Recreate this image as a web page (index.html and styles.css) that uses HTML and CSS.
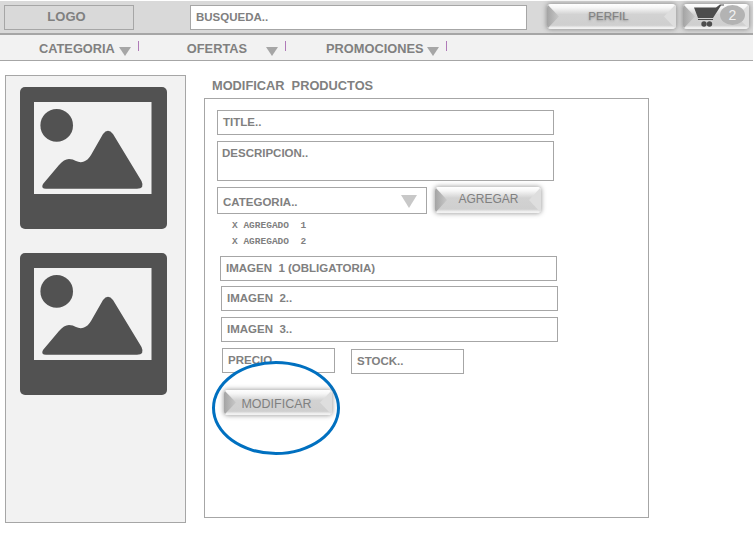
FILE: index.html
```html
<!DOCTYPE html>
<html lang="es">
<head>
  <meta charset="UTF-8" />
  <title>Modificar productos</title>
  <link rel="stylesheet" href="styles.css">
</head>
<body>

  <header class="topbar">
    <div class="logo">LOGO</div>
    <div class="search">BUSQUEDA..</div>
    <div class="btn btn-perfil"><span>PERFIL</span></div>
    <div class="btn btn-cart">
      <svg class="cart-icon" width="32" height="26" viewBox="0 0 32 26">
        <path d="M0 3.5H22L26 .5H30V1.500H27L19 14H4z" fill="#4d4d4d"/>
        <rect x="4" y="15" width="15" height="1" fill="#4d4d4d"/>
        <circle cx="10" cy="20" r="2.700" fill="#4d4d4d"/>
        <circle cx="15.500" cy="20" r="2.700" fill="#4d4d4d"/>
      </svg>
      <span class="cart-count">2</span>
    </div>
  </header>

  <nav class="menu">
    <div class="menu-item item-cat">CATEGORIA<i class="arrow"></i><b class="sep"></b></div>
    <div class="menu-item item-ofe">OFERTAS<i class="arrow"></i><b class="sep"></b></div>
    <div class="menu-item item-pro">PROMOCIONES<i class="arrow"></i><b class="sep"></b></div>
  </nav>

  <div class="content">
    <aside class="sidebar">
      <svg class="thumb" width="147" height="142" viewBox="0 0 147 142">
        <defs>
          <g id="picture">
            <rect width="147" height="142" rx="5" fill="#525252"/>
            <rect x="14" y="15" width="117.500" height="92" fill="#f2f2f2"/>
            <circle cx="36.700" cy="38.400" r="16.300" fill="#525252"/>
            <path d="M26 101.700Q20.500 101.700 23 97L39 78Q44 72 49 72Q53 72 56 74Q60 76 64 74.500Q68 73 71 68L83 47Q88 40.500 93 47L121.500 94Q125 101.700 117 101.700z" fill="#525252"/>
          </g>
        </defs>
        <use href="#picture"/>
      </svg>
      <svg class="thumb" width="147" height="142" viewBox="0 0 147 142">
        <use href="#picture"/>
      </svg>
    </aside>

    <main class="main">
      <h1 class="title">MODIFICAR&nbsp; PRODUCTOS</h1>
      <section class="panel">
        <div class="field f-title">TITLE..</div>
        <div class="field f-desc">DESCRIPCION..</div>
        <div class="cat-row">
          <div class="field f-cat">CATEGORIA..<i class="arrow arrow-big"></i></div>
          <div class="btn btn-agregar"><span>AGREGAR</span></div>
        </div>
        <ul class="added">
          <li>X AGREGADO&nbsp; 1</li>
          <li>X AGREGADO&nbsp; 2</li>
        </ul>
        <div class="field f-img1">IMAGEN&nbsp; 1 (OBLIGATORIA)</div>
        <div class="field f-img2">IMAGEN&nbsp; 2..</div>
        <div class="field f-img3">IMAGEN&nbsp; 3..</div>
        <div class="price-row">
          <div class="field f-precio">PRECIO</div>
          <div class="field f-stock">STOCK..</div>
        </div>
        <div class="highlight"></div>
        <div class="btn btn-modificar"><span>MODIFICAR</span></div>
      </section>
    </main>
  </div>

</body>
</html>
```

FILE: styles.css
```css
body {
  margin: 0;
  background-color: #fff;
  color: #808080;
  font-family: "Liberation Sans", Arial, sans-serif;
  font-size: 11.5px;
  font-weight: bold;
  overflow: hidden;
}

/* barra superior */
.topbar {
  display: flex;
  align-items: flex-start;
  box-sizing: border-box;
  width: 753px;
  height: 34px;
  margin-top: 1px;
  padding-top: 3px;
  background-color: #d9d9d9;
  border-bottom: 2px solid #a6a6a6;
}

.logo {
  box-sizing: border-box;
  width: 130px;
  height: 25px;
  margin: 1px 0 0 4px;
  padding-right: 5px;
  border: 1px solid #a6a6a6;
  font-size: 13px;
  line-height: 22px;
  text-align: center;
}

.search {
  box-sizing: border-box;
  width: 337px;
  height: 25px;
  margin: 1px 0 0 56px;
  padding-left: 5px;
  border: 1px solid #a6a6a6;
  background-color: #fff;
  line-height: 22px;
}

/* botones con bisel */
.btn {
  position: relative;
  box-sizing: border-box;
  border-radius: 4px;
  background: linear-gradient(#fff 0, #f6f6f6 15%, #d2d2d2 42%, #cfcfcf 85%, #eee 94%, #f4f4f4 100%);
  box-shadow: 0 0 4px 1px rgba(90, 90, 90, 0.5);
  font-size: 12px;
  font-weight: normal;
  text-align: center;
  overflow: hidden;
}

.btn::before,
.btn::after {
  content: "";
  position: absolute;
  top: 0;
  bottom: 0;
  width: 12px;
}

.btn::before {
  left: 0;
  background: linear-gradient(90deg, #a4a4a4, #c8c8c8);
  clip-path: polygon(0 0, 100% 50%, 0 100%);
}

.btn::after {
  right: 0;
  background: #dedede;
  clip-path: polygon(100% 0, 0 50%, 100% 100%);
}

.btn-perfil {
  width: 129px;
  height: 25px;
  margin-left: 20px;
  padding-right: 6px;
  font-size: 11.5px;
  line-height: 25px;
  text-shadow: 0 1px 2px rgba(90, 90, 90, 0.5);
}

.btn-cart {
  width: 66px;
  height: 25px;
  margin-left: 7px;
}

.cart-icon {
  position: absolute;
  left: 11px;
  top: 0;
  z-index: 1;
}

.cart-count {
  position: absolute;
  right: 4px;
  top: 1px;
  z-index: 1;
  width: 25px;
  height: 20px;
  border-radius: 50%;
  background-color: #b3b3b3;
  color: #f2f2f2;
  font-size: 14px;
  line-height: 20px;
}

.btn-agregar {
  width: 106px;
  height: 26px;
  margin-left: 8px;
  padding-left: 1px;
  line-height: 25px;
}

.btn-modificar {
  width: 108px;
  height: 25px;
  margin: 16px 0 0 19px;
  padding-right: 3px;
  font-size: 12.500px;
  line-height: 28px;
}

/* menu */
.menu {
  display: flex;
  width: 753px;
  height: 25px;
  background-color: #f2f2f2;
  border-bottom: 1px solid #a6a6a6;
}

.menu-item {
  display: flex;
  align-items: center;
  padding-top: 1px;
  font-size: 12.800px;
}

.item-cat { margin-left: 39px; }
.item-ofe { margin-left: 48px; }
.item-pro { margin-left: 40px; }

.arrow {
  display: block;
  width: 0;
  height: 0;
  margin: 6px 0 0 4px;
  border-style: solid;
  border-width: 9px 6px 0;
  border-color: #a6a6a6 transparent transparent;
}

.item-ofe .arrow { margin-left: 19px; }

.sep {
  display: block;
  width: 1px;
  height: 10px;
  margin: -4px 0 0 7px;
  background-color: #b07ab8;
}

/* contenido */
.content {
  display: flex;
  margin-top: 14px;
}

.sidebar {
  display: flex;
  flex-direction: column;
  gap: 24px;
  box-sizing: border-box;
  width: 181px;
  height: 448px;
  margin-left: 5px;
  padding: 11px 0 0 14px;
  border: 1px solid #a6a6a6;
  background-color: #f2f2f2;
}

.main {
  margin-left: 18px;
}

.title {
  margin: 4px 0 5px 8px;
  font-size: 12.800px;
  line-height: 14px;
}

.panel {
  position: relative;
  box-sizing: border-box;
  width: 445px;
  height: 420px;
  padding-top: 11px;
  border: 1px solid #a6a6a6;
}

.field {
  box-sizing: border-box;
  height: 25px;
  padding-left: 5px;
  border: 1px solid #a6a6a6;
  background-color: #fff;
  line-height: 22px;
}

.f-title { width: 337px; margin-left: 12px; }
.f-desc { width: 337px; height: 40px; margin: 6px 0 0 12px; padding-left: 4px; }

.cat-row {
  display: flex;
  margin: 6px 0 0 12px;
}

.f-cat {
  position: relative;
  width: 210px;
  height: 27px;
  line-height: 28px;
}

.arrow-big {
  position: absolute;
  right: 9px;
  top: 7px;
  margin: 0;
  border-width: 13px 8.500px 0;
  border-top-color: #c8c8c8;
}

.added {
  margin: 4px 0 0 27px;
  padding: 0;
  list-style: none;
  font-family: "Liberation Mono", monospace;
  font-size: 9.500px;
  line-height: 16px;
}

.f-img1 { width: 337px; margin: 6px 0 0 15px; }
.f-img2 { width: 337px; margin: 5px 0 0 16px; }
.f-img3 { width: 337px; margin: 6px 0 0 16px; }

.price-row {
  display: flex;
  align-items: flex-start;
  margin: 6px 0 0 17px;
}

.f-precio { width: 113px; }
.f-stock { width: 113px; margin: 1px 0 0 16px; }

/* circulo azul encima de precio */
.highlight {
  position: absolute;
  left: 7px;
  top: 262px;
  box-sizing: border-box;
  width: 128px;
  height: 94px;
  border: 3px solid #0070c0;
  border-radius: 50%;
  background-color: #fff;
}
```
